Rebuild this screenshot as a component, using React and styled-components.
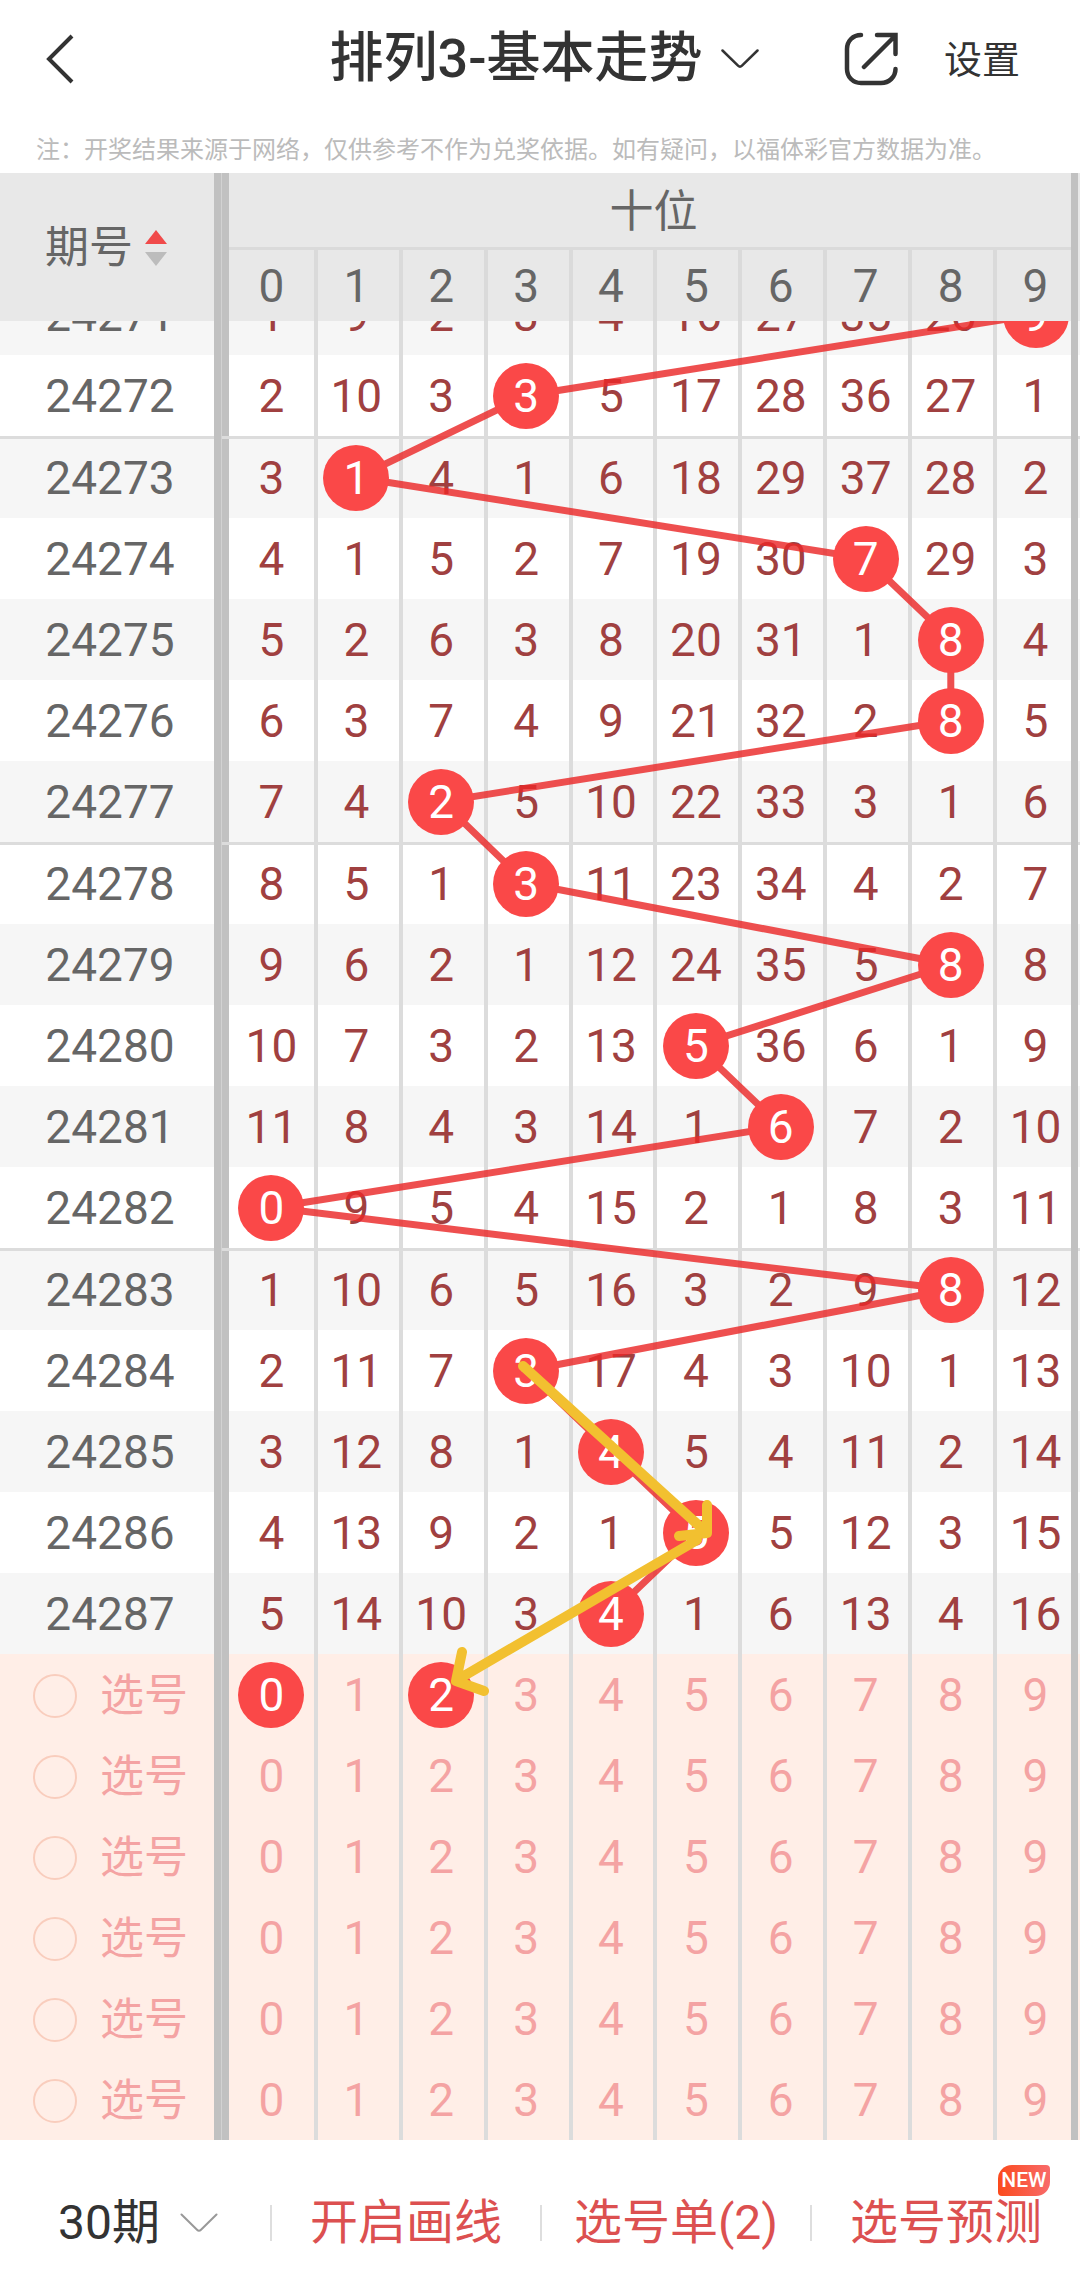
import React from "react";
import styled, { createGlobalStyle } from "styled-components";

const GlobalStyle = createGlobalStyle`
  * {
    box-sizing: border-box;
  }
  body {
    margin: 0;
    background: #fff;
    font-family: Roboto, "Noto Sans CJK SC", sans-serif;
  }
  button {
    margin: 0;
    padding: 0;
    border: none;
    background: none;
    font-family: inherit;
    cursor: pointer;
  }
`;

const Page = styled.div`
  display: flex;
  flex-direction: column;
`;

const Header = styled.header`
  display: grid;
  grid-template-columns: 1fr auto 1fr;
  align-items: center;
  height: 118px;
  padding: 0 8px 0 16px;
`;

const BackButton = styled.button`
  display: flex;
  justify-self: start;
  padding: 10px 30px;
`;

const TitleButton = styled.button`
  display: flex;
  align-items: center;
  gap: 18px;
  color: #333;
`;

const Title = styled.h1`
  margin: 0;
  font-size: 54px;
  line-height: 64px;
  font-weight: 500;
`;

const Actions = styled.div`
  display: flex;
  align-items: center;
  justify-content: flex-end;
  gap: 46px;
  padding-right: 52px;
`;

const ShareButton = styled.button`
  display: flex;
`;

const SettingsButton = styled.button`
  padding-top: 2px;
  font-size: 38px;
  line-height: 48px;
  color: #333;
`;

const Note = styled.p`
  height: 55px;
  margin: 0;
  padding: 14px 36px 0;
  font-size: 24px;
  line-height: 36px;
  color: #bbb;
  white-space: nowrap;
`;

const Chart = styled.main`
  position: relative;
`;

const Table = styled.table`
  width: 100%;
  table-layout: fixed;
  border-collapse: separate;
  border-spacing: 0;
  font-size: 46px;
  line-height: 54px;
  color: #666;

  th,
  td {
    padding: 0;
    font-weight: 400;
    text-align: center;
  }
`;

const Col = styled.col`
  width: ${(p) => p.$width};
`;

const HeadRow = styled.tr`
  height: ${(p) => p.$height}px;
  background: #e8e8e8;
`;

const IssueHead = styled.th`
  border-right: 7px solid #c1c1c1;
`;

const SortButton = styled.button`
  display: inline-flex;
  align-items: center;
  gap: 12px;
  padding: 2px 2px 0 0;
  font-size: 44px;
  line-height: 54px;
  color: #666;
`;

const PlaceHead = styled.th`
  font-size: 44px;
  box-shadow: inset 0 -3px #dadada;
`;

const DigitHead = styled.th`
  box-shadow: ${(p) => (p.$first ? "none" : "inset 4px 0 #dadada")};
`;

const Row = styled.tr`
  height: ${(p) => p.$height}px;
  background: ${(p) => p.$bg};
`;

const groupLine = (p) => (p.$group ? "inset 0 3px #dcdcdc" : "inset 0 0 #dcdcdc");

const Issue = styled.th`
  border-right: 7px solid #c1c1c1;
  box-shadow: ${groupLine};
`;

const Bar = styled.td`
  border-left: 1px solid #d2d2d2;
  background: #c1c1c1;
  box-shadow: ${groupLine};
`;

const Edge = styled.td`
  box-shadow: ${groupLine};
`;

const Cell = styled.td`
  color: ${(p) => (p.$pick ? "#f4a3a3" : "#a04040")};
  box-shadow: ${groupLine}${(p) => (p.$first ? "" : ", inset 4px 0 #dcdcdc")};
`;

// the top row is scrolled half way under the header
const Clip = styled.div`
  display: flex;
  align-items: flex-end;
  justify-content: center;
  height: ${(p) => p.$height}px;
  overflow: hidden;
`;

const Slot = styled.div`
  display: flex;
  flex: none;
  align-items: center;
  justify-content: center;
  height: 81px;
`;

const IssueSlot = styled(Slot)`
  padding-left: 6px;
`;

const Ball = styled.span`
  position: relative;
  z-index: 2;
  display: flex;
  align-items: center;
  justify-content: center;
  width: 66px;
  height: 66px;
  border-radius: 50%;
  background: #fa4848;
  color: #fff;
`;

const PickButton = styled.button`
  display: inline-flex;
  align-items: center;
  justify-content: center;
  height: 66px;
  min-width: 66px;
  font-size: 46px;
  line-height: 54px;
  color: inherit;
  vertical-align: middle;
`;

const PickLabel = styled.label`
  display: flex;
  align-items: center;
  gap: 23px;
  padding: 2px 0 0 33px;
  font-size: 44px;
  color: #f4a3a3;
`;

const PickCheck = styled.input`
  appearance: none;
  width: 44px;
  height: 44px;
  margin: 0;
  border: 2px solid #f9cdbd;
  border-radius: 50%;
`;

const Overlay = styled.svg`
  position: absolute;
  top: ${(p) => p.$top}px;
  left: 230px;
  z-index: ${(p) => p.$z};
  width: calc(100% - 232px);
  height: ${(p) => p.$height}px;
  pointer-events: none;
`;

const RightBar = styled.div`
  position: absolute;
  top: 0;
  right: 2px;
  bottom: 0;
  width: 7px;
  background: #c1c1c1;
`;

const Footer = styled.footer`
  display: grid;
  grid-template-columns: repeat(4, 1fr);
  align-items: center;
  height: 156px;
  padding-top: 10px;
`;

const FooterItem = styled.div`
  display: flex;
  align-items: center;
  justify-content: center;
  height: 36px;
  padding-left: ${(p) => (p.$first ? "6px" : "0")};
  border-left: ${(p) => (p.$first ? "none" : "2px solid #dedede")};
`;

const FooterButton = styled.button`
  position: relative;
  display: flex;
  align-items: center;
  gap: 20px;
  font-size: 48px;
  line-height: 60px;
  color: ${(p) => (p.$dark ? "#333" : "#dc5050")};
  white-space: nowrap;
`;

const NewBadge = styled.span`
  position: absolute;
  top: -28px;
  right: -8px;
  width: 52px;
  height: 31px;
  border-radius: 14px 4px 14px 4px;
  background: linear-gradient(90deg, #fb4a1c, #f86a6a);
  color: #fff;
  font-size: 21px;
  font-weight: 500;
  line-height: 31px;
  text-align: center;
`;

const DIGITS = [0, 1, 2, 3, 4, 5, 6, 7, 8, 9];
const HEAD_TOP = 77;
const HEAD_BOTTOM = 71;
const ROW = 81;
const CLIPPED = 34;
const WIDTH = 848;

const draws = [
  { issue: "24271", hit: 9, cells: [1, 9, 2, 3, 4, 16, 27, 35, 26, 9] },
  { issue: "24272", hit: 3, cells: [2, 10, 3, 3, 5, 17, 28, 36, 27, 1] },
  { issue: "24273", hit: 1, cells: [3, 1, 4, 1, 6, 18, 29, 37, 28, 2] },
  { issue: "24274", hit: 7, cells: [4, 1, 5, 2, 7, 19, 30, 7, 29, 3] },
  { issue: "24275", hit: 8, cells: [5, 2, 6, 3, 8, 20, 31, 1, 8, 4] },
  { issue: "24276", hit: 8, cells: [6, 3, 7, 4, 9, 21, 32, 2, 8, 5] },
  { issue: "24277", hit: 2, cells: [7, 4, 2, 5, 10, 22, 33, 3, 1, 6] },
  { issue: "24278", hit: 3, cells: [8, 5, 1, 3, 11, 23, 34, 4, 2, 7] },
  { issue: "24279", hit: 8, cells: [9, 6, 2, 1, 12, 24, 35, 5, 8, 8] },
  { issue: "24280", hit: 5, cells: [10, 7, 3, 2, 13, 5, 36, 6, 1, 9] },
  { issue: "24281", hit: 6, cells: [11, 8, 4, 3, 14, 1, 6, 7, 2, 10] },
  { issue: "24282", hit: 0, cells: [0, 9, 5, 4, 15, 2, 1, 8, 3, 11] },
  { issue: "24283", hit: 8, cells: [1, 10, 6, 5, 16, 3, 2, 9, 8, 12] },
  { issue: "24284", hit: 3, cells: [2, 11, 7, 3, 17, 4, 3, 10, 1, 13] },
  { issue: "24285", hit: 4, cells: [3, 12, 8, 1, 4, 5, 4, 11, 2, 14] },
  { issue: "24286", hit: 5, cells: [4, 13, 9, 2, 1, 5, 5, 12, 3, 15] },
  { issue: "24287", hit: 4, cells: [5, 14, 10, 3, 4, 1, 6, 13, 4, 16] },
];

const picks = [[0, 2], [], [], [], [], []];

// a separator is drawn above every fifth issue
const startsGroup = (index) => index % 5 === 2;

const rowHeight = (index) => {
  if (index === 0) return CLIPPED;
  return startsGroup(index) ? ROW + 1 : ROW;
};

const bodyHeight =
  draws.reduce((sum, _, i) => sum + rowHeight(i), 0) + picks.length * ROW;

const trendPoints = () => {
  let bottom = 0;
  return draws
    .map(({ hit }, i) => {
      bottom += rowHeight(i);
      const x = ((hit + 0.5) * WIDTH) / 10;
      return `${x},${bottom - ROW / 2}`;
    })
    .join(" ");
};

const Chevron = ({ color, width }) => (
  <svg width="38" height="20" viewBox="0 0 38 20" fill="none" aria-hidden="true">
    <path
      d="M1.5 1.5 17 16.700q2 2 4 0L36.500 1.500"
      stroke={color}
      strokeWidth={width}
      strokeLinecap="round"
    />
  </svg>
);

const TopBar = () => (
  <Header>
    <BackButton aria-label="返回">
      <svg width="28" height="50" viewBox="0 0 28 50" fill="none">
        <path d="M26 2 3 25l23 23" stroke="#333" strokeWidth="4" />
      </svg>
    </BackButton>
    <TitleButton>
      <Title>排列3-基本走势</Title>
      <Chevron color="#333" width={2.5} />
    </TitleButton>
    <Actions>
      <ShareButton aria-label="分享">
        <svg width="54" height="54" viewBox="0 0 54 54" fill="none">
          <path
            d="M17 3C9 3 3 9 3 17v20c0 8 6 14 14 14h20c8 0 14.500-6 14.500-14M33 3h18.500v19M51 4 20 35"
            stroke="#333"
            strokeWidth="4.500"
            strokeLinecap="round"
          />
        </svg>
      </ShareButton>
      <SettingsButton>设置</SettingsButton>
    </Actions>
  </Header>
);

const TableHead = () => (
  <thead>
    <HeadRow $height={HEAD_TOP}>
      <IssueHead rowSpan={2} scope="col">
        <SortButton>
          期号
          <svg width="22" height="36" viewBox="0 0 22 36" aria-hidden="true">
            <path d="M11 0 22 14H0z" fill="#f04a4a" />
            <path d="M11 36 0 22h22z" fill="#bcbcbc" />
          </svg>
        </SortButton>
      </IssueHead>
      <Bar as="th" rowSpan={2} />
      <PlaceHead colSpan={10} scope="colgroup">
        十位
      </PlaceHead>
      <Edge as="th" rowSpan={2} />
    </HeadRow>
    <HeadRow $height={HEAD_BOTTOM}>
      {DIGITS.map((d) => (
        <DigitHead key={d} $first={d === 0} scope="col">
          {d}
        </DigitHead>
      ))}
    </HeadRow>
  </thead>
);

const DrawRow = ({ draw, index }) => {
  const height = rowHeight(index);
  const group = startsGroup(index);
  return (
    <Row $height={height} $bg={index % 2 ? "#fff" : "#f6f6f6"}>
      <Issue scope="row" $group={group}>
        <Clip $height={height}>
          <IssueSlot>{draw.issue}</IssueSlot>
        </Clip>
      </Issue>
      <Bar $group={group} />
      {draw.cells.map((value, d) => (
        <Cell key={d} $first={d === 0} $group={group}>
          <Clip $height={height}>
            <Slot>{d === draw.hit ? <Ball>{value}</Ball> : value}</Slot>
          </Clip>
        </Cell>
      ))}
      <Edge $group={group} />
    </Row>
  );
};

const PickRow = ({ chosen }) => (
  <Row $height={ROW} $bg="#ffeee7">
    <Issue scope="row">
      <PickLabel>
        <PickCheck type="checkbox" />
        选号
      </PickLabel>
    </Issue>
    <Bar />
    {DIGITS.map((d) => (
      <Cell key={d} $first={d === 0} $pick>
        <PickButton aria-pressed={chosen.includes(d)}>
          {chosen.includes(d) ? <Ball>{d}</Ball> : d}
        </PickButton>
      </Cell>
    ))}
    <Edge />
  </Row>
);

const TrendChart = () => (
  <Chart>
    <Table>
      <colgroup>
        <Col $width="221px" />
        <Col $width="8px" />
        {DIGITS.map((d) => (
          <Col key={d} $width="auto" />
        ))}
        <Col $width="2px" />
      </colgroup>
      <TableHead />
      <tbody>
        {draws.map((draw, i) => (
          <DrawRow key={draw.issue} draw={draw} index={i} />
        ))}
        {picks.map((chosen, i) => (
          <PickRow key={i} chosen={chosen} />
        ))}
      </tbody>
    </Table>
    <RightBar />
    <Overlay
      $top={HEAD_TOP + HEAD_BOTTOM}
      $height={bodyHeight}
      $z={1}
      viewBox={`0 0 ${WIDTH} ${bodyHeight}`}
      preserveAspectRatio="none"
      aria-hidden="true"
    >
      <polyline
        points={trendPoints()}
        fill="none"
        stroke="#ea2828"
        strokeOpacity="0.82"
        strokeWidth="7"
      />
    </Overlay>
    <Overlay
      $top={HEAD_TOP + HEAD_BOTTOM}
      $height={bodyHeight}
      $z={3}
      viewBox={`0 0 ${WIDTH} ${bodyHeight}`}
      preserveAspectRatio="none"
      aria-hidden="true"
    >
      <g
        fill="none"
        stroke="#f2c030"
        strokeWidth="10"
        strokeLinecap="round"
        strokeLinejoin="round"
      >
        <path d="M293 1045 476 1211M477 1184v28l-28 3" />
        <path d="M467 1219 227 1359M232 1331l-6 29 28 10" />
      </g>
    </Overlay>
  </Chart>
);

const BottomBar = () => (
  <Footer>
    <FooterItem $first>
      <FooterButton $dark>
        30期
        <Chevron color="#999" width={2} />
      </FooterButton>
    </FooterItem>
    <FooterItem>
      <FooterButton>开启画线</FooterButton>
    </FooterItem>
    <FooterItem>
      <FooterButton>选号单(2)</FooterButton>
    </FooterItem>
    <FooterItem>
      <FooterButton>
        选号预测
        <NewBadge>NEW</NewBadge>
      </FooterButton>
    </FooterItem>
  </Footer>
);

const App = () => (
  <Page>
    <GlobalStyle />
    <TopBar />
    <Note>
      注：开奖结果来源于网络，仅供参考不作为兑奖依据。如有疑问，以福体彩官方数据为准。
    </Note>
    <TrendChart />
    <BottomBar />
  </Page>
);

export default App;
